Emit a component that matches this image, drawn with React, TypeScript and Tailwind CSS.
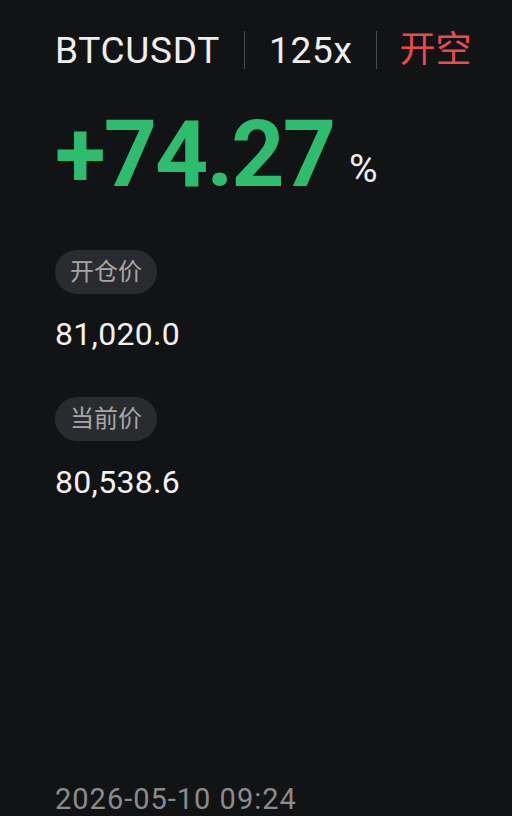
export default function App() {
  return (
    <div
      className="w-[512px] h-[816px] bg-[#121315] text-white overflow-hidden flex flex-col pl-[55px]"
      style={{ fontFamily: 'Roboto, "Noto Sans CJK SC", sans-serif' }}
    >
      <div className="flex items-center h-[38px] mt-[31px]">
        <span className="text-[37px] leading-none tracking-[0.7px] text-[#eeeeee]">BTCUSDT</span>
        <span className="w-px h-[38px] bg-[#4a4b4d] mx-[24px]" />
        <span className="text-[37px] leading-none tracking-[0.7px] text-[#eeeeee]">125x</span>
        <span className="w-px h-[38px] bg-[#4a4b4d] mx-[23px]" />
        <span className="text-[36px] leading-none text-[#ea4b4f]">开空</span>
      </div>
      <div className="flex items-end mt-[39px]">
        <span className="text-[93px] leading-none font-bold text-[#2ebd6e] tracking-[-2px]">+74.27</span>
        <span className="text-[39px] leading-none text-[#eeeeee] ml-[15px] mb-[12px]">%</span>
      </div>
      <div className="mt-[49px] flex">
        <span className="h-[44px] px-[15px] rounded-full bg-[#2a2b2e] text-[#a6a6a8] text-[24px] flex items-center">开仓价</span>
      </div>
      <div className="mt-[24px] text-[32px] leading-none tracking-[0.3px] text-[#f2f2f2]">81,020.0</div>
      <div className="mt-[47px] flex">
        <span className="h-[44px] px-[15px] rounded-full bg-[#2a2b2e] text-[#a6a6a8] text-[24px] flex items-center">当前价</span>
      </div>
      <div className="mt-[25px] text-[32px] leading-none tracking-[0.3px] text-[#f2f2f2]">80,538.6</div>
      <div className="mt-auto mb-[2px] text-[29px] leading-none tracking-[1px] text-[#8b8b8d]">2026-05-10 09:24</div>
    </div>
  );
}
